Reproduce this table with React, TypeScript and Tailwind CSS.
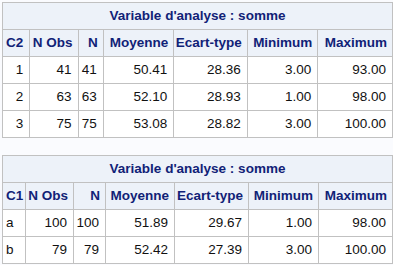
const cols = ['N Obs', 'N', 'Moyenne', 'Ecart-type', 'Minimum', 'Maximum']

type Row = { key: string; vals: string[] }

const table1: Row[] = [
  { key: '1', vals: ['41', '41', '50.41', '28.36', '3.00', '93.00'] },
  { key: '2', vals: ['63', '63', '52.10', '28.93', '1.00', '98.00'] },
  { key: '3', vals: ['75', '75', '53.08', '28.82', '3.00', '100.00'] },
]

const table2: Row[] = [
  { key: 'a', vals: ['100', '100', '51.89', '29.67', '1.00', '98.00'] },
  { key: 'b', vals: ['79', '79', '52.42', '27.39', '3.00', '100.00'] },
]

function StatTable({
  label,
  rows,
  widths,
  keyAlign,
}: {
  label: string
  rows: Row[]
  widths: string[]
  keyAlign: 'left' | 'right'
}) {
  const keyCls = keyAlign === 'left' ? 'text-left pl-[3px]' : 'text-right pr-[6px]'
  return (
    <table className="table-fixed border-collapse text-[13.5px] leading-[16px]">
      <colgroup>
        {widths.map((w, i) => (
          <col key={i} className={w} />
        ))}
      </colgroup>
      <thead>
        <tr className="h-[27px]">
          <th colSpan={7} className="border border-[#c1c1c1] bg-[#edf2f9] text-center font-bold text-[#112277]">
            Variable d'analyse : somme
          </th>
        </tr>
        <tr className="h-[27px]">
          <th className={`border border-[#c1c1c1] bg-[#edf2f9] font-bold text-[#112277] ${keyCls}`}>{label}</th>
          {cols.map((c) => (
            <th key={c} className="border border-[#c1c1c1] bg-[#edf2f9] text-right pr-[5px] font-bold text-[#112277] whitespace-nowrap">
              {c}
            </th>
          ))}
        </tr>
      </thead>
      <tbody>
        {rows.map((r) => (
          <tr key={r.key} className="h-[27px]">
            <td className={`border border-[#c1c1c1] bg-white text-[#111] ${keyCls}`}>{r.key}</td>
            {r.vals.map((v, i) => (
              <td key={i} className="border border-[#c1c1c1] bg-white text-right pr-[6px] text-[#111]">
                {v}
              </td>
            ))}
          </tr>
        ))}
      </tbody>
    </table>
  )
}

export default function App() {
  return (
    <div className="min-h-[265px] bg-[#fafbfe] pl-[2px] pt-[2px] font-['Liberation_Sans',Arial,sans-serif]">
      <div className="flex flex-col gap-[17px]">
        <StatTable
          label="C2"
          rows={table1}
          keyAlign="right"
          widths={['w-[27px]', 'w-[48px]', 'w-[25px]', 'w-[70px]', 'w-[73px]', 'w-[70px]', 'w-[74px]']}
        />
        <StatTable
          label="C1"
          rows={table2}
          keyAlign="left"
          widths={['w-[23px]', 'w-[48px]', 'w-[32px]', 'w-[69px]', 'w-[74px]', 'w-[70px]', 'w-[74px]']}
        />
      </div>
    </div>
  )
}
